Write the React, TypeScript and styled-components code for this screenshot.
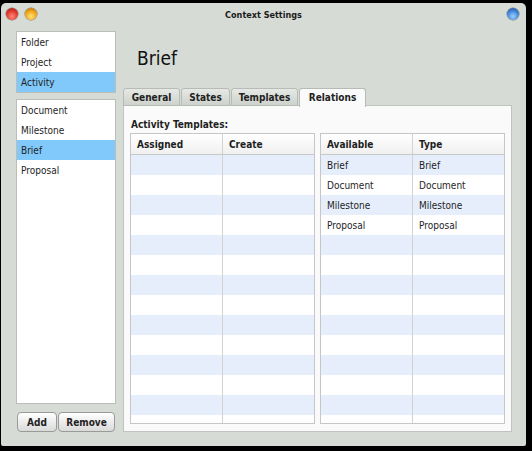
import React from 'react';
import styled, { createGlobalStyle, css } from 'styled-components';

const GlobalStyle = createGlobalStyle`
  html, body {
    margin: 0;
    padding: 0;
    background: #000;
  }
  body {
    font-family: "DejaVu Sans Condensed", Lato, "Liberation Sans", sans-serif;
    font-size: 10px;
    color: #1e1e1e;
  }
`;

const Window = styled.div`
  box-sizing: border-box;
  width: 525px;
  height: 443px;
  margin: 3px 0 0 1px;
  background: #d6dbd5;
  border-radius: 5px 5px 2px 2px;
  display: flex;
  flex-direction: column;
  overflow: hidden;
`;

const TitleBar = styled.div`
  position: relative;
  height: 23px;
  flex-shrink: 0;
  display: flex;
  align-items: center;
  justify-content: center;
  font-weight: bold;
  font-size: 9px;
  color: #1a1a1a;
`;

const Light = styled.span<{ $color: 'red' | 'orange' | 'blue' }>`
  position: absolute;
  top: 5px;
  width: 12px;
  height: 12px;
  border-radius: 50%;
  box-shadow: 0 0 0 0.5px rgba(0, 0, 0, 0.45);
  ${(p) =>
    p.$color === 'red' &&
    css`
      left: 5px;
      background: radial-gradient(circle at 50% 70%, #ff8a7e 0%, #e0362a 55%, #8d1410 100%);
    `}
  ${(p) =>
    p.$color === 'orange' &&
    css`
      left: 24px;
      background: radial-gradient(circle at 50% 70%, #ffe37a 0%, #f0a316 55%, #a15c08 100%);
    `}
  ${(p) =>
    p.$color === 'blue' &&
    css`
      right: 7px;
      background: radial-gradient(circle at 50% 70%, #9fd0ff 0%, #3f84d8 55%, #1b3f86 100%);
    `}
`;

const Body = styled.div`
  flex: 1;
  min-height: 0;
  display: flex;
  gap: 7px;
  padding: 5px 14px 14px 15px;
`;

const Sidebar = styled.div`
  width: 100px;
  display: flex;
  flex-direction: column;
`;

const ListBox = styled.div<{ $grow?: boolean }>`
  background: #fff;
  border: 1px solid #b9beb8;
  ${(p) => (p.$grow ? 'flex: 1; min-height: 0;' : 'height: 60px; flex-shrink: 0;')}
  margin-bottom: 6px;
  overflow: hidden;
`;

const ListItem = styled.div<{ $selected?: boolean }>`
  height: 20px;
  line-height: 21px;
  padding-left: 4px;
  background: ${(p) => (p.$selected ? '#80c9fa' : 'transparent')};
`;

const ButtonRow = styled.div`
  display: flex;
  gap: 1px;
  margin-top: 2px;
  padding-left: 1px;
  flex-shrink: 0;
`;

const Button = styled.button<{ $width: number }>`
  width: ${(p) => p.$width}px;
  height: 20px;
  padding: 0;
  border: 1px solid #979c96;
  border-radius: 4px;
  background: linear-gradient(#ffffff, #ececec 50%, #dadada);
  font-family: inherit;
  font-size: 10px;
  font-weight: bold;
  color: #222;
`;

const Main = styled.div`
  flex: 1;
  min-height: 0;
  display: flex;
  flex-direction: column;
`;

const Heading = styled.h1`
  margin: 0;
  height: 57px;
  flex-shrink: 0;
  line-height: 55px;
  padding-left: 14px;
  font-size: 19px;
  font-weight: normal;
  color: #111;
`;

const Tabs = styled.div`
  display: flex;
  gap: 1px;
  height: 18px;
  flex-shrink: 0;
  position: relative;
  z-index: 1;
  margin-bottom: -1px;
`;

const Tab = styled.div<{ $width: number; $active?: boolean }>`
  box-sizing: border-box;
  width: ${(p) => p.$width}px;
  height: ${(p) => (p.$active ? 19 : 18)}px;
  border: 1px solid #b6bbb5;
  border-bottom: ${(p) => (p.$active ? 'none' : '1px solid #b6bbb5')};
  border-radius: 3px 3px 0 0;
  background: ${(p) => (p.$active ? '#fafafa' : 'linear-gradient(#e6e9e5, #cdd2cc)')};
  font-weight: bold;
  text-align: center;
  line-height: 18px;
  color: #222;
`;

const Panel = styled.div`
  flex: 1;
  min-height: 0;
  background: #fafafa;
  border: 1px solid #bfc4be;
  padding: 10px 6px 7px 6px;
  display: flex;
  flex-direction: column;
`;

const PanelLabel = styled.div`
  font-weight: bold;
  height: 17px;
  line-height: 17px;
  padding-left: 1px;
  flex-shrink: 0;
`;

const Tables = styled.div`
  flex: 1;
  min-height: 0;
  display: flex;
  gap: 5px;
`;

const Table = styled.div`
  flex: 1;
  border: 1px solid #c6c6c6;
  background: #fff;
  display: flex;
  flex-direction: column;
  overflow: hidden;
`;

const HeaderRow = styled.div`
  display: flex;
  height: 20px;
  flex-shrink: 0;
  background: linear-gradient(#ffffff, #f0f0f0);
  border-bottom: 1px solid #c8c8c8;
  font-weight: bold;
`;

const Row = styled.div<{ $striped: boolean }>`
  display: flex;
  height: 20px;
  flex-shrink: 0;
  background: ${(p) => (p.$striped ? '#e6eefc' : '#fff')};
`;

const Cell = styled.div`
  flex: 1;
  line-height: 21px;
  padding-left: 6px;
  &:first-child {
    border-right: 1px solid #d2d2d2;
  }
`;

type DataTableProps = {
  columns: [string, string];
  rows: [string, string][];
};

function DataTable({ columns, rows }: DataTableProps) {
  const filler = Array.from({ length: 14 }, (_, i) => rows[i] ?? ['', '']);
  return (
    <Table>
      <HeaderRow>
        <Cell>{columns[0]}</Cell>
        <Cell>{columns[1]}</Cell>
      </HeaderRow>
      {filler.map((r, i) => (
        <Row key={i} $striped={i % 2 === 0}>
          <Cell>{r[0]}</Cell>
          <Cell>{r[1]}</Cell>
        </Row>
      ))}
    </Table>
  );
}

const available: [string, string][] = [
  ['Brief', 'Brief'],
  ['Document', 'Document'],
  ['Milestone', 'Milestone'],
  ['Proposal', 'Proposal'],
];

export default function App() {
  return (
    <>
      <GlobalStyle />
      <Window>
        <TitleBar>
          <Light $color="red" />
          <Light $color="orange" />
          Context Settings
          <Light $color="blue" />
        </TitleBar>
        <Body>
          <Sidebar>
            <ListBox>
              <ListItem>Folder</ListItem>
              <ListItem>Project</ListItem>
              <ListItem $selected>Activity</ListItem>
            </ListBox>
            <ListBox $grow>
              <ListItem>Document</ListItem>
              <ListItem>Milestone</ListItem>
              <ListItem $selected>Brief</ListItem>
              <ListItem>Proposal</ListItem>
            </ListBox>
            <ButtonRow>
              <Button $width={40}>Add</Button>
              <Button $width={57}>Remove</Button>
            </ButtonRow>
          </Sidebar>
          <Main>
            <Heading>Brief</Heading>
            <Tabs>
              <Tab $width={57}>General</Tab>
              <Tab $width={49}>States</Tab>
              <Tab $width={67}>Templates</Tab>
              <Tab $width={67} $active>
                Relations
              </Tab>
            </Tabs>
            <Panel>
              <PanelLabel>Activity Templates:</PanelLabel>
              <Tables>
                <DataTable columns={['Assigned', 'Create']} rows={[]} />
                <DataTable columns={['Available', 'Type']} rows={available} />
              </Tables>
            </Panel>
          </Main>
        </Body>
      </Window>
    </>
  );
}
